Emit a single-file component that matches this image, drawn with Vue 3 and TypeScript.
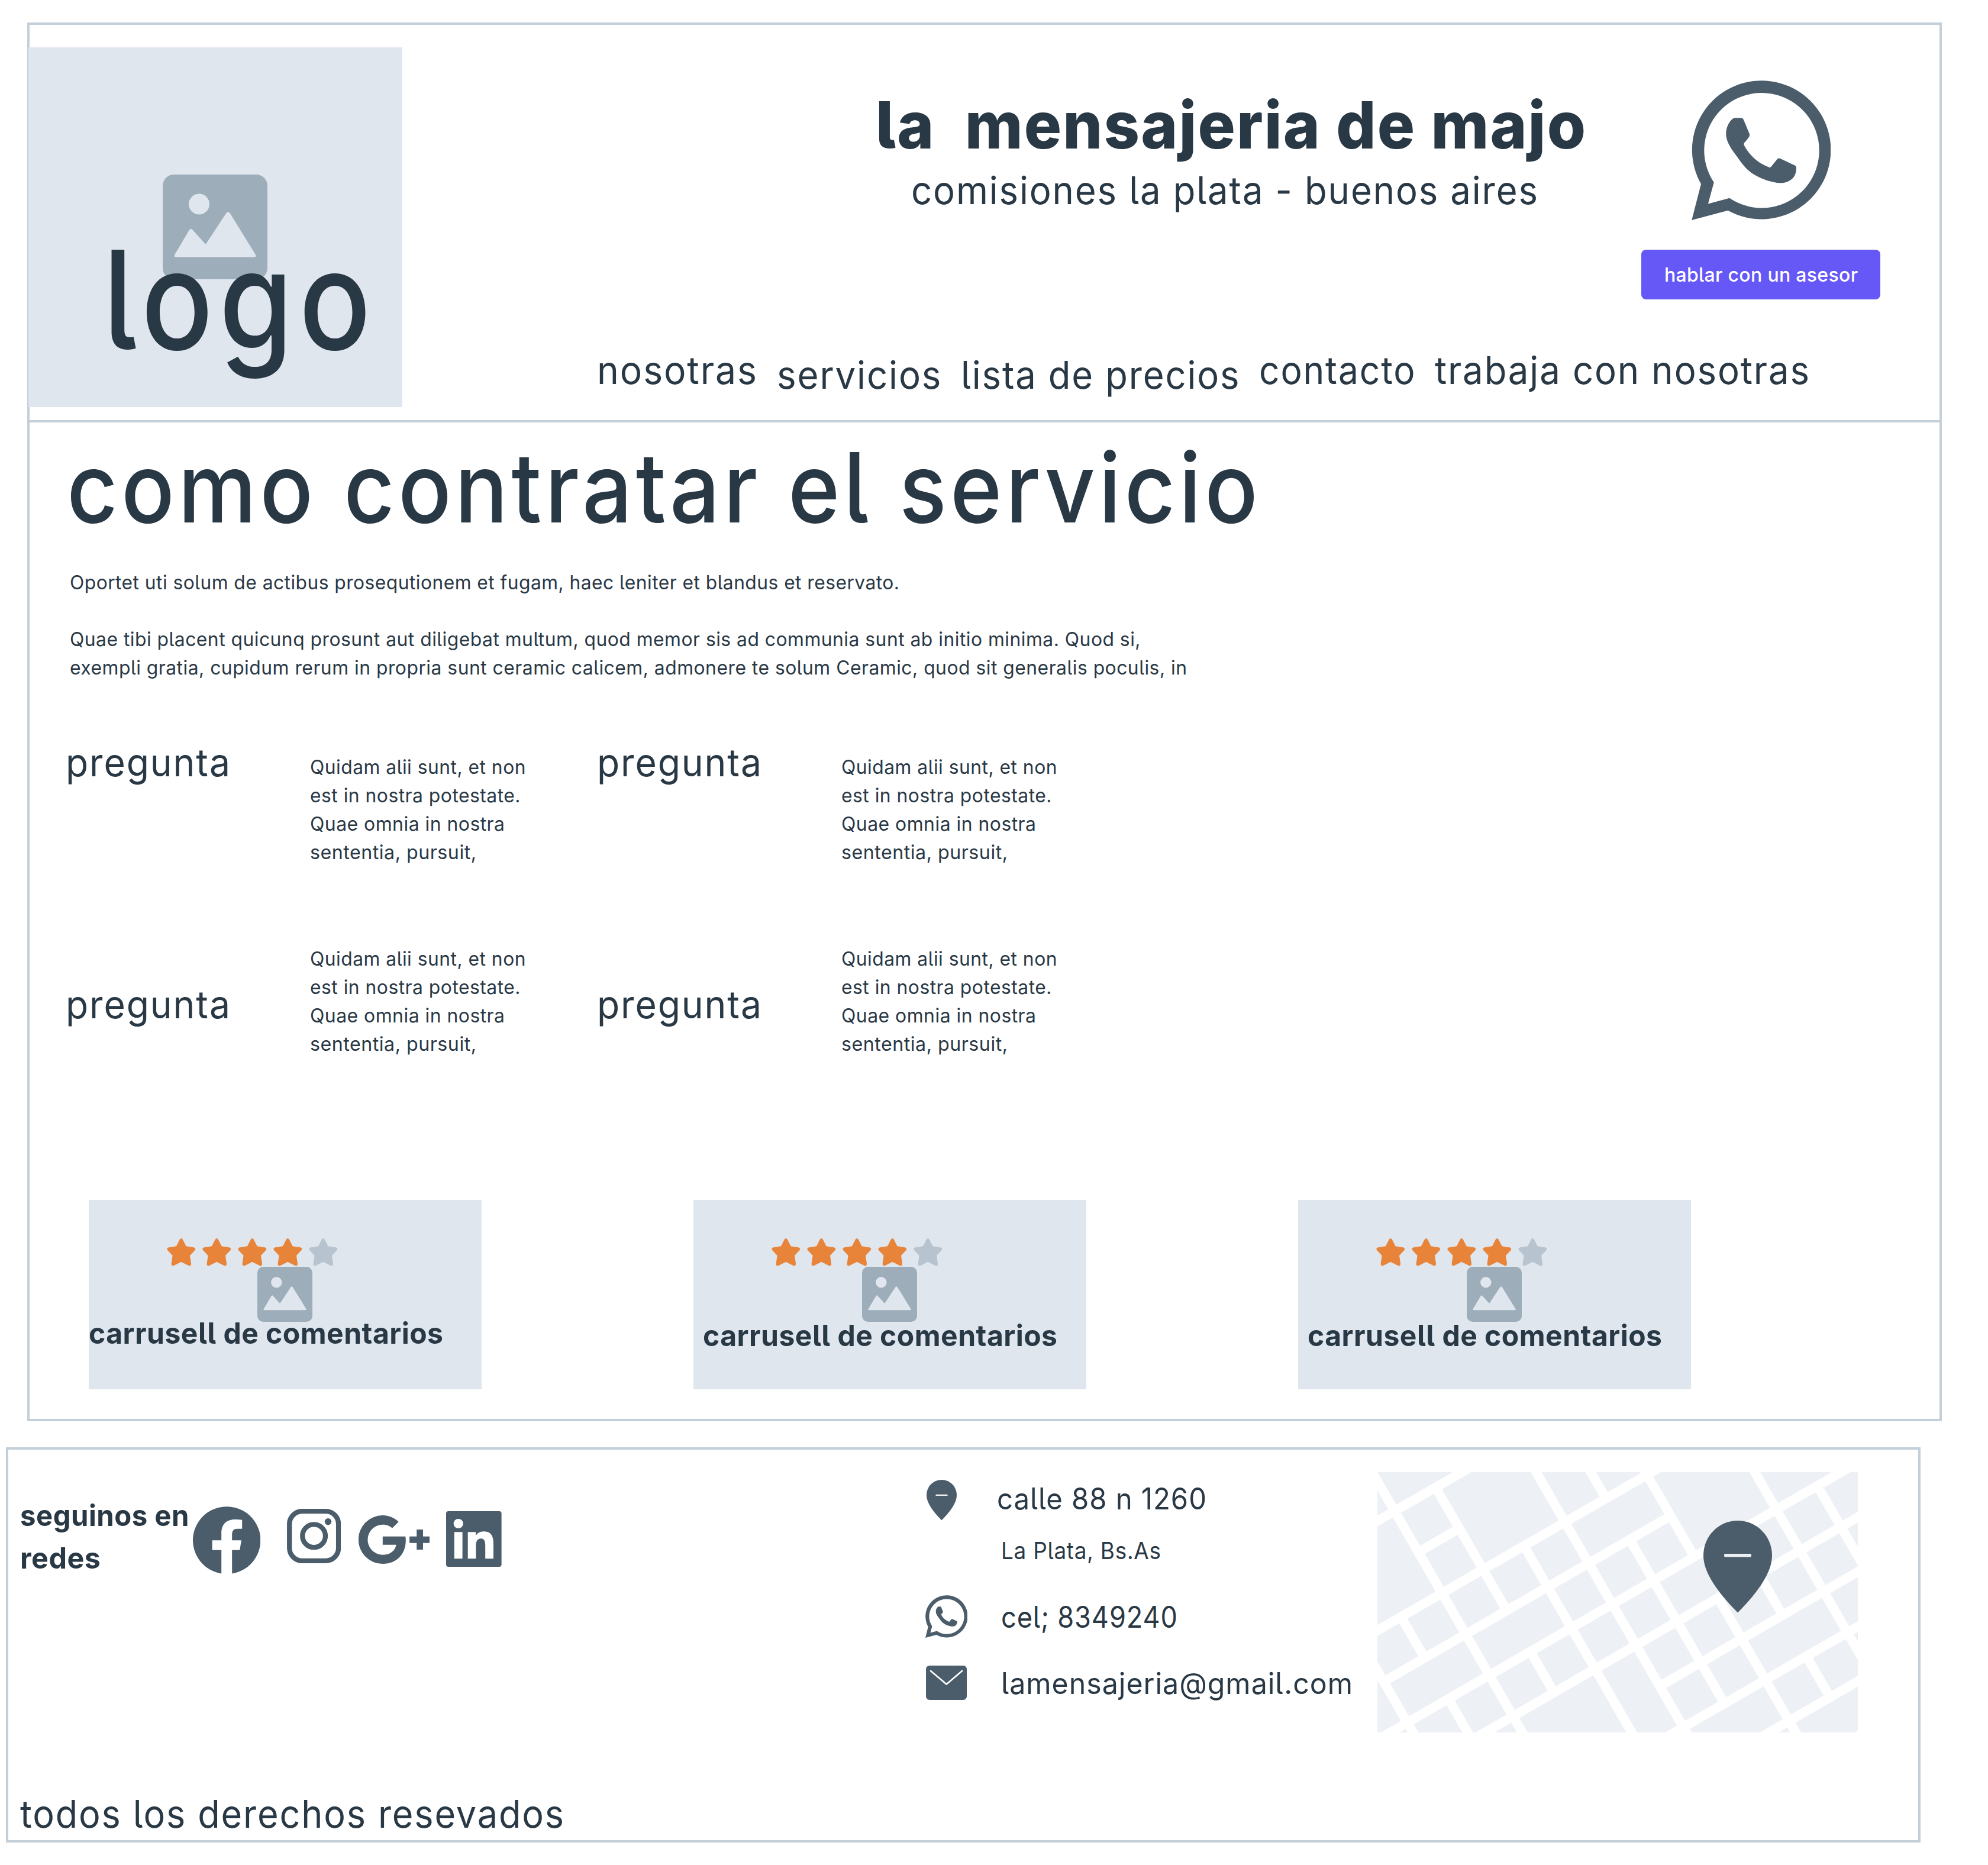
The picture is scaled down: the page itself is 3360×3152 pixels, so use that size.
<script setup lang="ts">
import type { Directive } from 'vue'

interface NavLink { label: string; width: number; low?: boolean }
interface Line { text: string; width: number }
interface Road { at: number; from: number; to: number }

// Condenses a line of text horizontally so that it occupies the given width,
// not counting the letter spacing that trails the last glyph.
const vFit: Directive<HTMLElement, number> = {
  mounted(el, { value }) {
    const natural = el.getBoundingClientRect().width
    const trailing = parseFloat(getComputedStyle(el).letterSpacing) || 0
    el.style.transform = `scaleX(${value / (natural - trailing)})`
    el.style.marginRight = `${value - natural}px`
  },
}

const links: NavLink[] = [
  { label: 'nosotras', width: 270 },
  { label: 'servicios', width: 277.5, low: true },
  { label: 'lista de precios', width: 470.5, low: true },
  { label: 'contacto', width: 263.5 },
  { label: 'trabaja con nosotras', width: 633 },
]

const intro: Line[][] = [
  [{ text: 'Oportet uti solum de actibus prosequtionem et fugam, haec leniter et blandus et reservato.', width: 1402 }],
  [
    { text: 'Quae tibi placent quicunq prosunt aut diligebat multum, quod memor sis ad communia sunt ab initio minima. Quod si,', width: 1809.5 },
    { text: 'exempli gratia, cupidum rerum in propria sunt ceramic calicem, admonere te solum Ceramic, quod sit generalis poculis, in', width: 1888 },
  ],
]

const answer: Line[] = [
  { text: 'Quidam alii sunt, et non', width: 364.5 },
  { text: 'est in nostra potestate.', width: 355.5 },
  { text: 'Quae omnia in nostra', width: 329 },
  { text: 'sententia, pursuit,', width: 281 },
]

const starPath =
  'M21.5 2.2Q24.3-2 27.1 2.2L32.6 13.2L45 15Q50 16.6 47.4 20L39 29L41 42.5Q41 47.5 36.8 46L24.3 39.8L11.8 46Q7.6 47.5 7.6 42.5L9.6 29L1.2 20Q-1.4 16.6 3.6 15L16 13.2Z'

// The map is a grid tilted 30 degrees: streets run up-right, avenues down-right.
const street = (i: number) => 82.7 + 92.45 * i
const avenue = (j: number) => -193.8 + 92.4 * j
const crossing = (i: number, j: number) => {
  const x = 0.75 * avenue(j) + 0.433 * street(i)
  return `${x.toFixed(1)} ${(street(i) - 0.5774 * x).toFixed(1)}`
}

const streets: Road[] = [
  { at: 0, from: -6, to: 16 },
  { at: 1, from: 2, to: 3 },
  { at: 2, from: -6, to: 18 },
  { at: 3, from: 0, to: 7 },
  { at: 4, from: -6, to: 20 },
  { at: 5, from: -6, to: 20 },
  { at: 6, from: 5, to: 10 },
  { at: 7, from: -6, to: 20 },
  { at: 8, from: -6, to: 20 },
  { at: 9, from: -6, to: 20 },
]
const avenues: Road[] = [
  { at: 0, from: -8, to: 14 },
  { at: 1, from: 2, to: 3 },
  { at: 1, from: 4, to: 14 },
  { at: 2, from: -8, to: 14 },
  { at: 3, from: 0, to: 3 },
  { at: 3, from: 4, to: 5 },
  { at: 4, from: 2, to: 14 },
  { at: 5, from: -8, to: 14 },
  { at: 6, from: -8, to: 2 },
  { at: 6, from: 3, to: 7 },
  { at: 7, from: -8, to: 4 },
  { at: 7, from: 5, to: 14 },
  { at: 8, from: 5, to: 6 },
  { at: 8, from: 7, to: 8 },
  { at: 9, from: -8, to: 14 },
  { at: 10, from: 4, to: 14 },
]
const roadPath = [
  ...streets.map((r) => `M${crossing(r.at, r.from)}L${crossing(r.at, r.to)}`),
  ...avenues.map((r) => `M${crossing(r.from, r.at)}L${crossing(r.to, r.at)}`),
].join('')
</script>

<template>
  <div class="page">
    <svg class="defs" width="0" height="0" aria-hidden="true">
      <symbol id="picture" viewBox="0 0 177 177">
        <rect width="177" height="177" rx="19" fill="#9dadba" />
        <circle cx="61.5" cy="50" r="17.5" fill="#dfe6ee" />
        <path d="M20.2 135.5L45 93.5Q47.5 90 50.5 93.5L72.6 118L107.5 65Q110.5 61.5 113.5 65L157 135.5Q158.5 139.5 155 139.5H22Q18.7 139.5 20.2 135.5Z" fill="#dfe6ee" />
      </symbol>
      <symbol id="whatsapp" viewBox="0 0 235 236.5">
        <path fill="#4b5c6a" fill-rule="evenodd" d="M0 236.5L15.8 175.3A117.5 117.3 0 1 1 61.3 220.3ZM27.7 208.9L64 199.2A97.4 97.4 0 1 0 37.6 172.7Z" />
        <path fill="#4b5c6a" d="M73.5 63.3H83.5Q86.5 63.3 87.8 66.5L97.6 90Q98.6 92.5 97.4 95C95 99 92 102.500 89 105.500Q87.800 107.500 88.800 110C98 127 112 140 131 147Q133 147.800 134.500 146L145 133Q146.800 131 149.500 132L175 144Q177.100 145 177.100 148C177.200 154 175.500 161 171.500 165C165 171.500 157 174 148.700 173.700C139 173.500 119 168 104.400 158.700C94 152 86 142.500 77.500 130C67 116.500 58.100 103 58.100 91C58.100 79 63 70 69.500 64.800Q71.500 63.300 73.500 63.300Z" />
      </symbol>
      <symbol id="pin" viewBox="0 0 116 155.500">
        <path fill="#4b5c6a" d="M58 0C90 0 116 26 116 59C116 86 95 118 58 155.500C21 118 0 86 0 59C0 26 26 0 58 0Z" />
        <rect x="35" y="56" width="46" height="5.500" rx="2" fill="#edf1f5" />
      </symbol>
    </svg>

    <div class="frame">
      <header class="header">
        <div class="logo">
          <svg class="logo-picture"><use href="#picture" /></svg>
          <span v-fit="453" class="text logo-text">logo</span>
        </div>

        <div class="header-main">
          <div class="header-top">
            <div class="titles">
              <h1 v-fit="1200" class="text brand">la&nbsp; mensajeria de majo</h1>
              <p v-fit="1059" class="text tagline">comisiones la plata - buenos aires</p>
            </div>
            <div class="advisor">
              <svg class="advisor-icon"><use href="#whatsapp" /></svg>
              <button class="advisor-button"><span v-fit="327" class="text">hablar con un asesor</span></button>
            </div>
          </div>
          <nav class="nav">
            <a v-for="link in links" :key="link.label" v-fit="link.width" class="text" :class="{ low: link.low }">{{ link.label }}</a>
          </nav>
        </div>
      </header>

      <main>
        <h2 v-fit="2013" class="text heading">como contratar el servicio</h2>
        <div class="intro">
          <p v-for="(paragraph, i) in intro" :key="i">
            <span v-for="line in paragraph" :key="line.text" v-fit="line.width" class="text line">{{ line.text }}</span>
          </p>
        </div>

        <section v-for="row in 2" :key="row" class="questions" :class="`questions-${row}`">
          <article v-for="col in 2" :key="col" class="question">
            <h3 v-fit="278" class="text question-title">pregunta</h3>
            <p class="answer">
              <span v-for="line in answer" :key="line.text" v-fit="line.width" class="text line">{{ line.text }}</span>
            </p>
          </article>
        </section>

        <section class="comments">
          <article v-for="card in 3" :key="card" class="card">
            <div class="stars">
              <svg v-for="star in 5" :key="star" viewBox="0 0 48.600 46.500" :class="{ off: star === 5 }"><path :d="starPath" /></svg>
            </div>
            <svg class="card-picture"><use href="#picture" /></svg>
            <span v-fit="599" class="text card-text">carrusell de comentarios</span>
          </article>
        </section>
      </main>
    </div>

    <footer class="footer">
      <div class="footer-top">
        <div class="follow">
          <span v-fit="285.5" class="text">seguinos en</span>
          <span v-fit="136" class="text">redes</span>
        </div>
        <svg class="facebook" viewBox="0 0 114.400 114">
          <path d="M48.200 113.500A57.200 57 0 1 1 66.200 113.500V73.700H79.200L82 57.300H66.200V47.500C66.200 41 69 37.700 75 37.700H83.200V22.700C79 22 75 21.800 71 22C56 22 48.200 31 48.200 45V57.300H32.700V73.700H48.200Z" />
        </svg>
        <svg class="instagram" viewBox="0 0 91.300 92">
          <rect x="4.200" y="4.200" width="82.900" height="83.600" rx="21.500" />
          <circle cx="45.600" cy="45.800" r="19.400" />
          <circle class="dot" cx="69.500" cy="21.700" r="5.700" />
        </svg>
        <svg class="google" viewBox="0 0 120 82">
          <path d="M67.700 11L56.800 21.700C53 18 47.500 15.800 40.800 15.800A25.300 25.400 0 0 0 40.800 66.800C52 66.800 61.500 61 63.700 49.700H40.800V35.700H79.200C79.700 38 79.800 40 79.800 42.500C79.800 66 64 82 40.800 82A41 41 0 0 1 40.800 0C51 0 60.500 4 67.700 11ZM86.100 35.700H98.200V24H109V35.700H120V46.700H109V58H98.200V46.700H86.100Z" />
        </svg>
        <svg class="linkedin" viewBox="0 0 93.600 94">
          <path fill-rule="evenodd" d="M4 0H89.600Q93.600 0 93.600 4V90Q93.600 94 89.600 94H4Q0 94 0 90V4Q0 0 4 0ZM20.700 12.900A8.100 8.100 0 1 0 20.700 29.100A8.100 8.100 0 1 0 20.700 12.900ZM13.800 35.300V80.300H27.600V35.300ZM36.700 35.300V80.300H50.400V58C50.400 51.500 52.500 46.200 58.800 46.200C65 46.200 66.200 51.500 66.200 58V80.300H80V55.500C80 42.500 76.500 34.200 63.500 34.200C57 34.200 52.300 37.500 50 41.300V35.300Z" />
        </svg>

        <address class="contacts">
          <div class="contact contact-address">
            <svg class="pin-small"><use href="#pin" /></svg>
            <span v-fit="354" class="text">calle 88 n 1260</span>
          </div>
          <div class="contact-city"><span v-fit="270" class="text">La Plata, Bs.As</span></div>
          <div class="contact contact-phone">
            <svg class="phone-small"><use href="#whatsapp" /></svg>
            <span v-fit="298" class="text">cel; 8349240</span>
          </div>
          <div class="contact contact-mail">
            <svg class="mail-small" viewBox="0 0 69 58">
              <rect width="69" height="58" rx="6" fill="#4b5c6a" />
              <path d="M8 9L34.700 31.500L61 9" fill="none" stroke="#fff" stroke-width="2.700" stroke-linecap="round" stroke-linejoin="round" />
            </svg>
            <span v-fit="594" class="text">lamensajeria@gmail.com</span>
          </div>
        </address>

        <div class="map">
          <svg class="map-roads" viewBox="0 0 812 440">
            <path :d="roadPath" fill="none" stroke="#fff" stroke-width="15.800" />
          </svg>
          <svg class="map-pin"><use href="#pin" /></svg>
        </div>
      </div>
      <p v-fit="919" class="text copyright">todos los derechos resevados</p>
    </footer>
  </div>
</template>

<style>
body {
  margin: 0;
  background: #fff;
}
</style>

<style scoped>
.page {
  box-sizing: border-box;
  width: 3360px;
  height: 3152px;
  padding-top: 38px;
  overflow: hidden;
  background: #fff;
  color: #293845;
  font-family: Inter, Roboto, sans-serif;
  font-feature-settings: 'cv05' 1;
}

.defs {
  position: absolute;
}

h1, h2, h3, p {
  margin: 0;
}

svg {
  display: block;
  flex: none;
}

.text {
  display: block;
  flex: none;
  width: max-content;
  white-space: nowrap;
  font-weight: 440;
  letter-spacing: 0.03em;
  transform-origin: left center;
}

.frame,
.footer {
  box-sizing: border-box;
  width: 3236px;
  border: 4px solid #c3cfd9;
}

.frame {
  height: 2364px;
  margin-left: 46px;
}

/* Header */
.header {
  box-sizing: border-box;
  display: flex;
  height: 672px;
  border-bottom: 4px solid #c3cfd9;
}

.logo {
  position: relative;
  display: flex;
  align-items: center;
  justify-content: center;
  box-sizing: border-box;
  flex: none;
  width: 632px;
  height: 608px;
  margin: 38px 0 0 -2px;
  padding: 0 2px 2px 0;
  background: #dfe6ee;
}

.logo-picture {
  width: 177px;
  height: 177px;
}

.text.logo-text {
  position: absolute;
  top: 313px;
  left: 126px;
  font-size: 231px;
  font-weight: 510;
  line-height: 226px;
  letter-spacing: 0.05em;
}

.header-main {
  margin-left: 320px;
}

.header-top {
  display: flex;
  height: 464px;
}

.titles {
  width: 1202px;
  margin: 109px 93px 0 479px;
}

.text.brand {
  margin-left: 1px;
  font-size: 110px;
  font-weight: 760;
  line-height: 120px;
  letter-spacing: 0.02em;
}

.tagline {
  margin: 11px 0 0 61px;
  font-size: 65px;
  line-height: 80px;
}

.advisor {
  display: flex;
  flex-direction: column;
  align-items: center;
  width: 404px;
  padding-top: 94px;
}

.advisor-icon {
  width: 235px;
  height: 236px;
}

.advisor-button {
  display: flex;
  align-items: center;
  box-sizing: border-box;
  width: 404px;
  height: 84px;
  margin-top: 50px;
  padding: 0 0 0 39px;
  border: 0;
  border-radius: 8px;
  background: #6658f6;
  color: #fff;
  font-family: inherit;
  font-feature-settings: inherit;
}

.advisor-button .text {
  font-size: 33px;
  font-weight: 540;
  line-height: 42px;
  letter-spacing: 0.01em;
}

.nav {
  display: flex;
  gap: 33.5px;
  margin: 79.7px 0 0 9.4px;
  font-size: 65px;
  line-height: 80px;
}

.nav .low {
  margin-top: 8px;
}

/* Body */
.text.heading {
  margin: 20px 0 0 63px;
  font-size: 163px;
  font-weight: 500;
  line-height: 180px;
  letter-spacing: 0.04em;
}

.intro {
  margin: 46px 0 0 67.5px;
}

.intro p + p {
  margin-top: 48px;
}

.text.line {
  font-size: 33px;
  font-weight: 420;
  line-height: 48px;
  letter-spacing: 0.015em;
}

.questions {
  display: flex;
  margin-left: 60.5px;
}

.questions-1 {
  margin-top: 97.2px;
}

.questions-2 {
  margin-top: 131.7px;
}

.question {
  display: flex;
  width: 898px;
}

.question-title {
  font-size: 65px;
  line-height: 80px;
}

.questions-2 .question-title {
  margin-top: 61.8px;
}

.answer {
  margin-left: 135px;
}

.questions-1 .answer {
  margin-top: 23px;
}

.comments {
  display: flex;
  gap: 358px;
  margin: 240.1px 0 0 100px;
}

.card {
  position: relative;
  display: flex;
  align-items: center;
  justify-content: center;
  box-sizing: border-box;
  flex: none;
  width: 664px;
  height: 320px;
  padding: 0 2px 1px 0;
  background: #dfe6ee;
}

.stars {
  position: absolute;
  top: 65px;
  left: 131.7px;
  display: flex;
  gap: 11.4px;
}

.stars svg {
  width: 48.6px;
  height: 46.5px;
  overflow: visible;
  fill: #e88439;
}

.stars .off {
  fill: #b7c4cf;
}

.card-picture {
  width: 93px;
  height: 93px;
}

.text.card-text {
  position: absolute;
  top: 199px;
  left: 16px;
  font-size: 50px;
  font-weight: 700;
  line-height: 60px;
  letter-spacing: 0.01em;
}

.card:first-child .card-text {
  top: 195px;
  left: 0;
}

/* Footer */
.footer {
  display: flex;
  flex-direction: column;
  justify-content: space-between;
  height: 668px;
  margin: 44px 0 0 10px;
  padding-bottom: 4.3px;
}

.footer-top {
  display: flex;
  align-items: flex-start;
}

.follow {
  width: 292px;
  margin: 75px 0 0 20px;
  font-size: 50px;
  line-height: 72px;
}

.follow .text {
  font-weight: 700;
  letter-spacing: 0.01em;
}

.facebook,
.google,
.linkedin,
.instagram .dot {
  fill: #4b5c6a;
}

.facebook {
  width: 114.4px;
  height: 114px;
  margin-top: 96px;
}

.instagram {
  width: 91.3px;
  height: 92px;
  margin: 100px 0 0 44.5px;
  fill: none;
  stroke: #4b5c6a;
  stroke-width: 8.3px;
}

.instagram .dot {
  stroke: none;
}

.google {
  width: 120px;
  height: 82px;
  margin: 111px 0 0 29.9px;
}

.linkedin {
  width: 93.6px;
  height: 94px;
  margin: 104px 0 0 28.2px;
}

.contacts {
  flex: none;
  width: 764px;
  margin: 51px 0 0 716px;
  font-size: 50px;
  font-style: normal;
  line-height: 60px;
}

.contacts .text {
  font-weight: 430;
  letter-spacing: 0.02em;
}

.contact {
  display: flex;
  align-items: flex-start;
}

.contact-address {
  height: 68px;
}

.contact-address .text {
  margin-top: 2px;
}

.pin-small {
  width: 51px;
  height: 68.4px;
  margin: 0 68px 0 2.4px;
}

.contact-city {
  margin: 26.8px 0 0 128px;
  font-size: 40px;
  line-height: 50px;
}

.contact-phone {
  height: 72px;
  margin-top: 50.2px;
}

.contact-phone .text {
  margin-top: 7.2px;
}

.phone-small {
  width: 71.4px;
  height: 72px;
  margin-right: 57px;
}

.contact-mail {
  margin-top: 47px;
}

.mail-small {
  width: 69px;
  height: 58px;
  margin: 0 57.6px 0 1.4px;
}

.map {
  position: relative;
  flex: none;
  width: 812px;
  height: 440px;
  margin-top: 38px;
  background: #edf0f5;
}

.map-roads {
  width: 812px;
  height: 440px;
}

.map-pin {
  position: absolute;
  top: 82px;
  left: 551px;
  width: 116px;
  height: 155.5px;
}

.copyright {
  margin-left: 20px;
  font-size: 65px;
  line-height: 80px;
}
</style>
